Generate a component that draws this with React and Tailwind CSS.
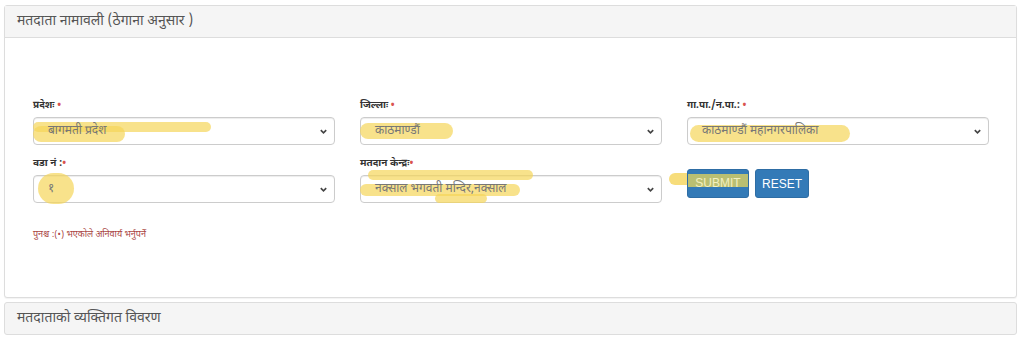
import React from 'react';

const font = { fontFamily: '"Noto Sans Devanagari", "Noto Sans", "Liberation Sans", sans-serif' };

function Chevron() {
  return (
    <svg width="9" height="9" viewBox="0 0 10 10" className="text-[#444]">
      <path d="M2 3.5 L5 6.5 L8 3.5" fill="none" stroke="currentColor" strokeWidth="1.8" />
    </svg>
  );
}

function Mark({ className }) {
  return <span className={`absolute bg-[#f5d55a] opacity-70 rounded-full pointer-events-none ${className}`} />;
}

function Field({ label, value, marks }) {
  return (
    <div className="flex flex-col">
      <label className="text-[10px] font-bold text-[#333] mb-[5px] h-[13px] leading-[13px]">
        {label}
      </label>
      <div className="relative h-[28px] border border-[#ccc] rounded-[4px] bg-white shadow-[inset_0_1px_1px_rgba(0,0,0,0.075)] flex items-center justify-between pl-[14px] pr-[6px]">
        {marks}
        <span className="relative text-[12px] text-[#777]">{value}</span>
        <Chevron />
      </div>
    </div>
  );
}

export default function App() {
  return (
    <div className="bg-white w-[1024px] h-[339px] pt-[5px] px-[4px]" style={font}>
      <div className="w-[1013px] border border-[#ddd] rounded-[3px] bg-white shadow-[0_1px_1px_rgba(0,0,0,0.05)]">
        <div className="h-[32px] bg-[#f5f5f5] border-b border-[#ddd] px-[12px] flex items-center text-[14px] text-[#555]">
          मतदाता नामावली (ठेगाना अनुसार )
        </div>
        <div className="pl-[28px] pr-[26px] pt-[61px] pb-[54px]">
          <div className="grid grid-cols-3 gap-x-[25px] gap-y-[12px] w-[956px]">
            <Field
              label={<>प्रदेशः <span className="text-[#d9534f]">•</span></>}
              value="बागमती प्रदेश"
              marks={<><Mark className="left-[-1px] top-[4px] w-[178px] h-[10px]" /><Mark className="left-[-1px] top-[8px] w-[92px] h-[16px]" /></>}
            />
            <Field
              label={<>जिल्लाः <span className="text-[#d9534f]">•</span></>}
              value="काठमाण्डौं"
              marks={<Mark className="left-[-1px] top-[5px] w-[93px] h-[16px]" />}
            />
            <Field
              label={<>गा.पा./न.पा.: <span className="text-[#d9534f]">•</span></>}
              value="काठमाण्डौं महानगरपालिका"
              marks={<Mark className="left-[2px] top-[7px] w-[160px] h-[17px]" />}
            />
            <Field
              label={<>वडा नं :<span className="text-[#d9534f]">•</span></>}
              value="१"
              marks={<Mark className="left-[4px] top-[-3px] w-[36px] h-[31px]" />}
            />
            <Field
              label={<>मतदान केन्द्रः<span className="text-[#d9534f]">•</span></>}
              value="नक्साल भगवती मन्दिर,नक्साल"
              marks={<><Mark className="left-[7px] top-[-6px] w-[165px] h-[10px]" /><Mark className="left-[-1px] top-[8px] w-[160px] h-[12px]" /><Mark className="left-[74px] top-[18px] w-[52px] h-[9px]" /></>}
            />
            <div className="relative flex items-start gap-[6px] pt-[12px]">
              <span className="absolute left-[-18px] top-[16px] w-[80px] h-[12px] bg-[#f5d55a] opacity-80 rounded-full" />
              <button className="relative h-[29px] w-[62px] rounded-[3px] bg-[#337ab7] border border-[#2e6da4] text-white text-[12px] overflow-hidden">
                <span className="absolute left-0 top-[4px] w-[62px] h-[13px] bg-[#c8c66a] opacity-90" />
                <span className="relative text-[#f4f0c0]" style={{ fontFamily: '"Liberation Sans", sans-serif' }}>SUBMIT</span>
              </button>
              <button className="h-[29px] w-[54px] rounded-[3px] bg-[#337ab7] border border-[#2e6da4] text-white text-[12px]" style={{ fontFamily: '"Liberation Sans", sans-serif' }}>
                RESET
              </button>
            </div>
          </div>
          <p className="mt-[26px] text-[9px] text-[#a94442]">पुनश्च :(•) भएकोले अनिवार्य भर्नुपर्ने</p>
        </div>
      </div>
      <div className="w-[1013px] mt-[4px] h-[33px] border border-[#ddd] rounded-[3px] bg-[#f5f5f5] px-[12px] flex items-center text-[14px] text-[#555]">
        मतदाताको व्यक्तिगत विवरण
      </div>
    </div>
  );
}
